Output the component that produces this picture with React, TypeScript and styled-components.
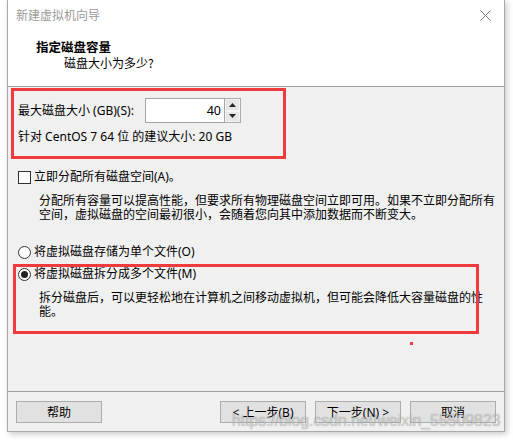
import React, { useState } from "react";
import styled, { createGlobalStyle } from "styled-components";

const GlobalStyle = createGlobalStyle`
  html, body {
    margin: 0;
    padding: 0;
    background: #ffffff;
  }
  body {
    font-family: "Noto Sans", "Noto Sans CJK SC", sans-serif;
    font-size: 12px;
    color: #000;
  }
`;

const Page = styled.div`
  width: 513px;
  height: 440px;
  overflow: hidden;
  padding-left: 7px;
  box-sizing: border-box;
`;

const Window = styled.div`
  position: relative;
  width: 498px;
  height: 432px;
  box-sizing: border-box;
  border: 1px solid #a9a9a9;
  border-top: none;
  background: #f0f0f0;
  box-shadow: 2px 2px 6px rgba(0, 0, 0, 0.22);
  display: flex;
  flex-direction: column;
`;

const TitleBar = styled.div`
  height: 30px;
  background: #fff;
  display: flex;
  align-items: center;
  justify-content: space-between;
  padding: 0 8px 0 8px;
`;

const Title = styled.span`
  color: #9a9a9a;
  font-family: "Noto Sans CJK SC", sans-serif;
  font-size: 12px;
  line-height: 14px;
`;

const CloseButton = styled.button`
  width: 30px;
  height: 30px;
  padding: 0;
  border: none;
  background: transparent;
  display: flex;
  align-items: center;
  justify-content: center;
  margin-right: -4px;
`;

const Header = styled.div`
  height: 57px;
  background: #fff;
  border-bottom: 1px solid #a0a0a0;
  padding: 10px 0 0 28px;
  box-sizing: border-box;
`;

const Heading = styled.div`
  font-family: "Noto Sans CJK SC", sans-serif;
  font-weight: 700;
  font-size: 12.5px;
  line-height: 14px;
`;

const SubHeading = styled.div`
  font-family: "Noto Sans CJK SC", sans-serif;
  line-height: 14px;
  margin: 2px 0 0 28px;
`;

const Body = styled.div`
  flex: 1;
  padding: 11px 0 0 10px;
  display: flex;
  flex-direction: column;
`;

const SizeRow = styled.div`
  display: flex;
  align-items: center;
  height: 25px;
`;

const Label = styled.span`
  line-height: 14px;
  width: 127px;
  white-space: nowrap;
`;

const SpinBox = styled.div`
  display: flex;
  height: 25px;
`;

const NumberField = styled.input`
  width: 80px;
  height: 25px;
  box-sizing: border-box;
  border: 1px solid #a5a5a5;
  background: #fff;
  text-align: right;
  font: inherit;
  font-size: 12.5px;
  padding: 0 3px 0 0;
  outline: none;
`;

const SpinButtons = styled.div`
  width: 16px;
  display: flex;
  flex-direction: column;
  border: 1px solid #acacac;
  border-left: none;
  box-sizing: border-box;
`;

const SpinButton = styled.div`
  flex: 1;
  background: #e6e6e6;
  border: 1px solid #f4f4f4;
  display: flex;
  align-items: center;
  justify-content: center;
`;

const Hint = styled.div`
  line-height: 14px;
  margin-top: 7px;
`;

const OptionRow = styled.label<{ $gap: number }>`
  display: flex;
  align-items: center;
  gap: 3px;
  line-height: 14px;
  margin-top: ${(p) => p.$gap}px;
`;

const CheckBox = styled.span`
  width: 13px;
  height: 13px;
  box-sizing: border-box;
  border: 1px solid #333;
  background: #fff;
  flex: none;
`;

const Radio = styled.span<{ $on?: boolean }>`
  width: 13px;
  height: 13px;
  box-sizing: border-box;
  border-radius: 50%;
  border: 1px solid #333;
  background: #fff;
  flex: none;
  display: flex;
  align-items: center;
  justify-content: center;
  &::after {
    content: "";
    width: 7px;
    height: 7px;
    border-radius: 50%;
    background: ${(p) => (p.$on ? "#222" : "transparent")};
  }
`;

const Desc = styled.div`
  line-height: 14px;
  margin: 9px 0 0 21px;
  width: 460px;
  font-family: "Noto Sans CJK SC", sans-serif;
`;

const Footer = styled.div`
  height: 40px;
  border-top: 1px solid #a0a0a0;
  display: flex;
  align-items: flex-start;
  padding: 9px 0 0 8px;
  box-sizing: border-box;
`;

const Button = styled.button<{ $push?: boolean }>`
  width: 86px;
  height: 22px;
  box-sizing: border-box;
  border: 1px solid #adadad;
  background: #e1e1e1;
  font: inherit;
  font-size: 12px;
  color: #000;
  padding: 0;
  margin-left: ${(p) => (p.$push ? "auto" : "9px")};
  &:first-child {
    margin-left: 0;
  }
  &:last-child {
    margin-right: 8px;
  }
`;

const Mark = styled.div<{ $x: number; $y: number; $w: number; $h: number }>`
  position: absolute;
  left: ${(p) => p.$x}px;
  top: ${(p) => p.$y}px;
  width: ${(p) => p.$w}px;
  height: ${(p) => p.$h}px;
  box-sizing: border-box;
  border: 3px solid #ef3b3b;
  pointer-events: none;
`;

const Dot = styled.div`
  position: absolute;
  left: 402px;
  top: 342px;
  width: 3px;
  height: 3px;
  background: #ef3b3b;
`;

const Watermark = styled.div`
  position: absolute;
  left: 224px;
  top: 412px;
  font-family: "Liberation Sans", Arial, sans-serif;
  font-size: 16px;
  line-height: 18px;
  letter-spacing: -0.1px;
  color: rgba(255, 255, 255, 0.55);
  text-shadow: 0 0 1px rgba(0, 0, 0, 0.45);
  white-space: nowrap;
  pointer-events: none;
`;

const Arrow = ({ up }: { up?: boolean }) => (
  <svg width="7" height="4" viewBox="0 0 7 4">
    <path d={up ? "M0 4 L3.5 0 L7 4 Z" : "M0 0 L3.5 4 L7 0 Z"} fill="#222" />
  </svg>
);

export default function App() {
  const [size] = useState("40");
  return (
    <Page>
      <GlobalStyle />
      <Window>
        <TitleBar>
          <Title>新建虚拟机向导</Title>
          <CloseButton aria-label="close">
            <svg width="11" height="11" viewBox="0 0 11 11">
              <path d="M0.5 0.5 L10.5 10.5 M10.5 0.5 L0.5 10.5" stroke="#7a7a7a" strokeWidth="1" />
            </svg>
          </CloseButton>
        </TitleBar>
        <Header>
          <Heading>指定磁盘容量</Heading>
          <SubHeading>磁盘大小为多少?</SubHeading>
        </Header>
        <Body>
          <SizeRow>
            <Label>最大磁盘大小 (GB)(S):</Label>
            <SpinBox>
              <NumberField value={size} readOnly />
              <SpinButtons>
                <SpinButton>
                  <Arrow up />
                </SpinButton>
                <SpinButton>
                  <Arrow />
                </SpinButton>
              </SpinButtons>
            </SpinBox>
          </SizeRow>
          <Hint>针对 CentOS 7 64 位 的建议大小: 20 GB</Hint>

          <OptionRow $gap={26}>
            <CheckBox />
            立即分配所有磁盘空间(A)。
          </OptionRow>
          <Desc>
            分配所有容量可以提高性能，但要求所有物理磁盘空间立即可用。如果不立即分配所有空间，虚拟磁盘的空间最初很小，会随着您向其中添加数据而不断变大。
          </Desc>

          <OptionRow $gap={24}>
            <Radio />
            将虚拟磁盘存储为单个文件(O)
          </OptionRow>
          <OptionRow $gap={8}>
            <Radio $on />
            将虚拟磁盘拆分成多个文件(M)
          </OptionRow>
          <Desc>
            拆分磁盘后，可以更轻松地在计算机之间移动虚拟机，但可能会降低大容量磁盘的性能。
          </Desc>
        </Body>
        <Footer>
          <Button>帮助</Button>
          <Button $push>&lt; 上一步(B)</Button>
          <Button>下一步(N) &gt;</Button>
          <Button>取消</Button>
        </Footer>

        <Mark $x={3} $y={88} $w={275} $h={71} />
        <Mark $x={5} $y={264} $w={466} $h={70} />
        <Dot />
        <Watermark>https://blog.csdn.net/weixin_55509823</Watermark>
      </Window>
    </Page>
  );
}
